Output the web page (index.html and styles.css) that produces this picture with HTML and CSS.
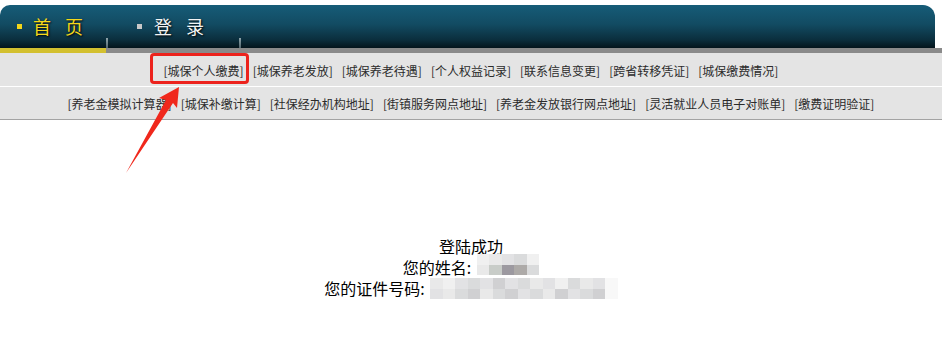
FILE: index.html
```html
<!DOCTYPE html>
<html lang="zh-CN">
<head>
<meta charset="utf-8">
<title>城保个人缴费</title>
<link rel="stylesheet" href="styles.css">
</head>
<body>
<header class="top">
  <div class="bar">
    <a class="tab tab-home" href="#"><span class="dot"></span><span class="tab-text">首 页</span></a>
    <span class="sep"></span>
    <a class="tab tab-login" href="#"><span class="dot"></span><span class="tab-text">登 录</span></a>
    <span class="sep"></span>
  </div>
  <div class="strip"><span class="strip-active"></span></div>
</header>
<nav class="links">
  <div class="links-row row-1">
    <a href="#">[城保个人缴费]</a>
    <a href="#">[城保养老发放]</a>
    <a href="#">[城保养老待遇]</a>
    <a href="#">[个人权益记录]</a>
    <a href="#">[联系信息变更]</a>
    <a href="#">[跨省转移凭证]</a>
    <a href="#">[城保缴费情况]</a>
  </div>
  <div class="links-row row-2">
    <a href="#">[养老金模拟计算器]</a>
    <a href="#">[城保补缴计算]</a>
    <a href="#">[社保经办机构地址]</a>
    <a href="#">[街镇服务网点地址]</a>
    <a href="#">[养老金发放银行网点地址]</a>
    <a href="#">[灵活就业人员电子对账单]</a>
    <a href="#">[缴费证明验证]</a>
  </div>
</nav>
<main class="content">
  <div class="line">登陆成功</div>
  <div class="line">您的姓名: <span class="mosaic mosaic-name">
    <i class="m1"></i><i class="m2"></i><i class="m3"></i><i class="m4"></i><i class="m1"></i>
    <i class="m2"></i><i class="m6"></i><i class="m8"></i><i class="m7"></i><i class="m4"></i>
  </span></div>
  <div class="line">您的证件号码: <span class="mosaic mosaic-id">
    <i class="m2"></i><i class="m1"></i><i class="m3"></i><i class="m4"></i><i class="m3"></i><i class="m5"></i><i class="m3"></i><i class="m4"></i><i class="m2"></i><i class="m3"></i><i class="m1"></i><i class="m4"></i><i class="m2"></i><i class="m3"></i><i class="m0"></i>
    <i class="m3"></i><i class="m2"></i><i class="m4"></i><i class="m5"></i><i class="m2"></i><i class="m4"></i><i class="m5"></i><i class="m3"></i><i class="m4"></i><i class="m2"></i><i class="m5"></i><i class="m3"></i><i class="m4"></i><i class="m5"></i><i class="m0"></i>
  </span></div>
</main>
<div class="mark-box"></div>
<svg class="mark-arrow" width="70" height="100" viewBox="120 80 70 100" aria-hidden="true">
  <polygon points="179,87 159,98 166,100 126,173 173,103 177,108" fill="#f0281c"/>
</svg>
</body>
</html>
```
FILE: styles.css
```css
* { box-sizing: border-box; }
html, body { margin: 0; padding: 0; background: #fff; }
body {
  font-family: "Noto Sans CJK SC", "Noto Sans", sans-serif;
  position: relative;
  width: 942px;
  height: 353px;
  overflow: hidden;
}
a { text-decoration: none; }

.top { padding-top: 5px; }
.bar {
  display: flex;
  height: 43px;
  margin-right: 7px;
  border-radius: 10px 12px 0 0;
  background: linear-gradient(#165c78 0%, #124b62 45%, #0b2f3e 80%, #03141b 100%);
}
.tab {
  display: flex;
  align-items: center;
  font-size: 18px;
  letter-spacing: 5px;
  text-shadow: 1px 1px 2px #000;
  line-height: 1;
  padding-bottom: 1px;
}
.tab-home { width: 106px; padding-left: 17px; color: #f5d81a; }
.tab-login { width: 131px; padding-left: 29px; color: #f2f4f4; }
.dot { width: 5px; height: 5px; margin-right: 11px; flex: none; }
.tab-home .dot { background: #f2d51a; }
.tab-login .dot { background: #c8c8c8; margin-right: 12px; }
.sep {
  width: 2px;
  height: 10px;
  align-self: flex-end;
  background: linear-gradient(#8fa3aa, #50666e);
}
.strip { height: 5px; background: #8a8a8a; }
.strip-active { display: block; width: 106px; height: 5px; background: #d3c02f; }

.links { background: #e4e4e4; border-bottom: 1px solid #a3a3a3; }
.links-row {
  display: flex;
  justify-content: center;
  align-items: center;
  gap: 9px;
  font-size: 12px;
}
.links-row a { color: #2b2b2b; }
.row-1 { height: 34px; border-bottom: 1px solid #fff; padding-top: 1px; }
.row-2 { height: 32px; }

.content {
  margin-top: 116px;
  text-align: center;
  font-size: 16px;
  line-height: 21px;
  color: #000;
}
.line { height: 21px; }
.mosaic {
  display: inline-grid;
  grid-auto-rows: 10.5px;
  vertical-align: top;
  height: 21px;
  margin-left: 2px;
}
.mosaic-name { grid-template-columns: repeat(5, 12.5px); margin-top: -3px; }
.mosaic-id { grid-template-columns: repeat(15, 12.5px); }
.mosaic i { display: block; }
.m0 { background: #f8f8f8; }
.m1 { background: #f0f0f0; }
.m2 { background: #e9e9e9; }
.m3 { background: #e2e2e4; }
.m4 { background: #dadbdc; }
.m5 { background: #d0d0d2; }
.m6 { background: #c8ccc8; }
.m7 { background: #adaaa8; }
.m8 { background: #9c99a0; }

.mark-box {
  position: absolute;
  left: 150px;
  top: 53px;
  width: 99px;
  height: 31px;
  border: 3px solid #ec231d;
  border-radius: 4px;
}
.mark-arrow {
  position: absolute;
  left: 120px;
  top: 80px;
}
```
